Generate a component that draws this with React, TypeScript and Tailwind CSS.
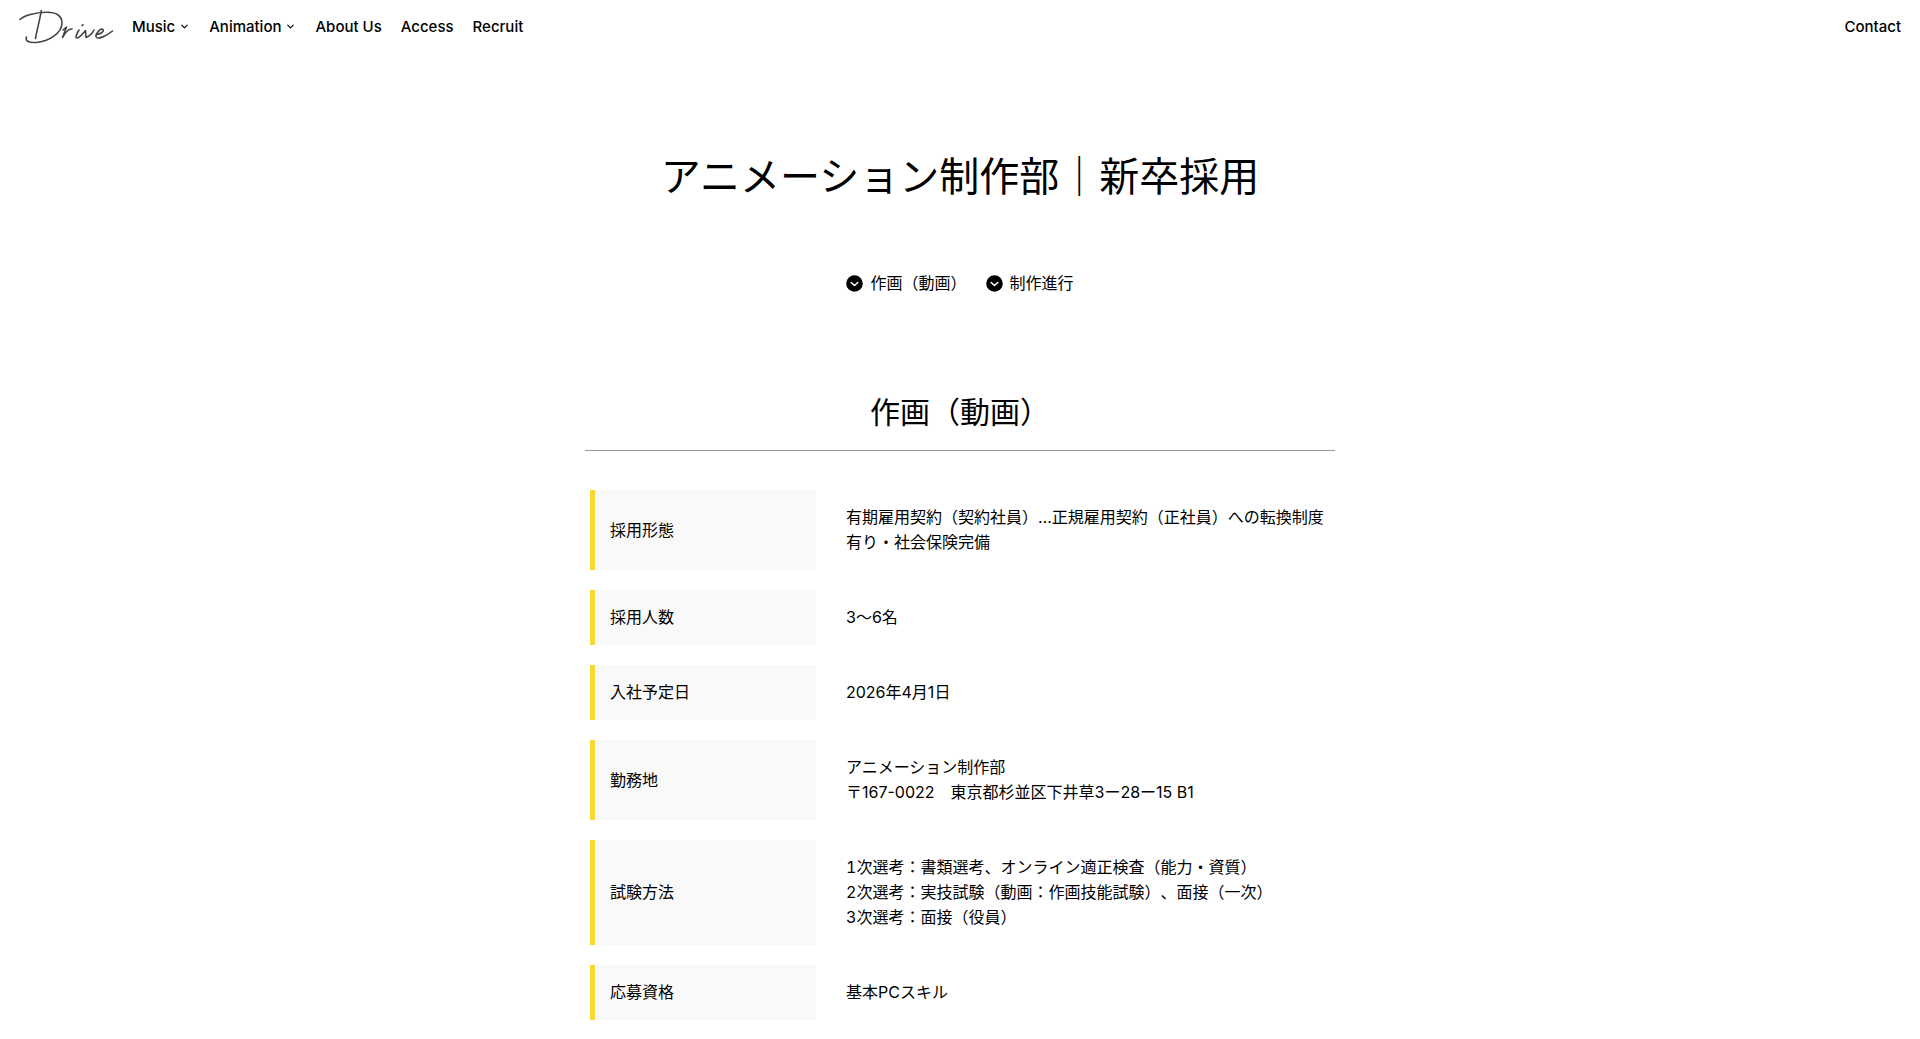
import { ChevronDown } from "lucide-react";

const sans = "font-[Inter,'Noto_Sans_CJK_JP',sans-serif]";

const navItems = [
  { label: "Music", hasMenu: true },
  { label: "Animation", hasMenu: true },
  { label: "About Us", hasMenu: false },
  { label: "Access", hasMenu: false },
  { label: "Recruit", hasMenu: false },
];

const anchors = ["作画（動画）", "制作進行"];

interface Row {
  title: string;
  lines: string[];
  numbered?: boolean;
}

const rows: Row[] = [
  {
    title: "採用形態",
    lines: ["有期雇用契約（契約社員）…正規雇用契約（正社員）への転換制度有り・社会保険完備"],
  },
  { title: "採用人数", lines: ["3〜6名"] },
  { title: "入社予定日", lines: ["2026年4月1日"] },
  {
    title: "勤務地",
    lines: ["アニメーション制作部", "〒167-0022　東京都杉並区下井草3ー28ー15 B1"],
  },
  {
    title: "試験方法",
    numbered: true,
    lines: [
      "1次選考：書類選考、オンライン適正検査（能力・資質）",
      "2次選考：実技試験（動画：作画技能試験）、面接（一次）",
      "3次選考：面接（役員）",
    ],
  },
  { title: "応募資格", lines: ["基本PCスキル"] },
];

function Logo() {
  return (
    <svg
      viewBox="0 0 100 40"
      className="h-10 w-[100px]"
      fill="none"
      stroke="#444"
      strokeWidth="1.6"
      strokeLinecap="round"
      strokeLinejoin="round"
      aria-label="Drive"
    >
      <path d="M1 13.5C5 9.500 16 6.500 27 6.300C37 6 43 9.500 43 17C43 27 30 35.500 17 36.500C9 37 6 34.500 7.500 31" />
      <path d="M22.300 4.500C21 13 18 24 16.500 32.500" />
      <path d="M44 24L47.500 21L43.500 31.500C46 27 49 22.500 53 23" />
      <path d="M60 24C57.500 28 56 32 58 32C60.500 32 64.500 27 66.500 24.500L67 31.500C70.500 30 73.500 27.500 75 24" />
      <path d="M63 19.500L64 18.800" />
      <path d="M77 28.500C81 28.500 85.500 25.500 84 23.500C82 21.500 76.500 27.500 77 30.500C78.500 34 87 30.500 93.500 25" />
    </svg>
  );
}

function CircleChevron() {
  return (
    <svg viewBox="0 0 17 17" className="size-[17px]" aria-hidden="true">
      <circle cx="8.500" cy="8.500" r="8.300" fill="#000" />
      <path d="M5.200 7.500L8.500 10.500L11.800 7.500" fill="none" stroke="#fff" strokeWidth="1.500" strokeLinecap="round" strokeLinejoin="round" />
    </svg>
  );
}

export default function App() {
  return (
    <div
      lang="ja"
      className={`min-h-screen bg-white text-base leading-[25px] text-black [text-spacing-trim:space-all] ${sans}`}
    >
      <header className="flex items-center justify-between px-[19px] py-[6px]">
        <div className="flex items-center gap-[13px]">
          <a href="#top">
            <Logo />
          </a>
          <nav className="flex items-center gap-[19px] text-[15px] font-medium">
            {navItems.map((item) => (
              <a key={item.label} href="#" className="flex items-center gap-1">
                {item.label}
                {item.hasMenu && <ChevronDown size={11} strokeWidth={2.5} className="mt-px" />}
              </a>
            ))}
          </nav>
        </div>
        <a href="#contact" className="text-[15px] font-medium">
          Contact
        </a>
      </header>

      <main className="mx-auto max-w-[750px]">
        <h1 className="mt-[95px] text-center text-[40px] leading-[60px]">
          アニメーション制作部｜新卒採用
        </h1>

        <div className="mt-16 flex justify-center gap-[19px]">
          {anchors.map((label) => (
            <a key={label} href="#" className="flex items-center gap-[7px]">
              <CircleChevron />
              {label}
            </a>
          ))}
        </div>

        <h2 className="mt-[94px] border-b border-[#999] pb-4 text-center text-[30px] leading-[44px]">
          作画（動画）
        </h2>

        <table className="mt-[19px] w-full border-separate border-spacing-x-[5px] border-spacing-y-5">
          <tbody>
            {rows.map((row) => (
              <tr key={row.title} className={row.numbered ? "tabular-nums" : ""}>
                <th className="w-[226px] border-l-5 border-[#f8d832] bg-[#f9f9f9] p-[15px] text-left font-normal">
                  {row.title}
                </th>
                <td className="py-[15px] pl-[25px]">
                  {row.lines.map((line) => (
                    <p key={line}>{line}</p>
                  ))}
                </td>
              </tr>
            ))}
          </tbody>
        </table>
      </main>
    </div>
  );
}
